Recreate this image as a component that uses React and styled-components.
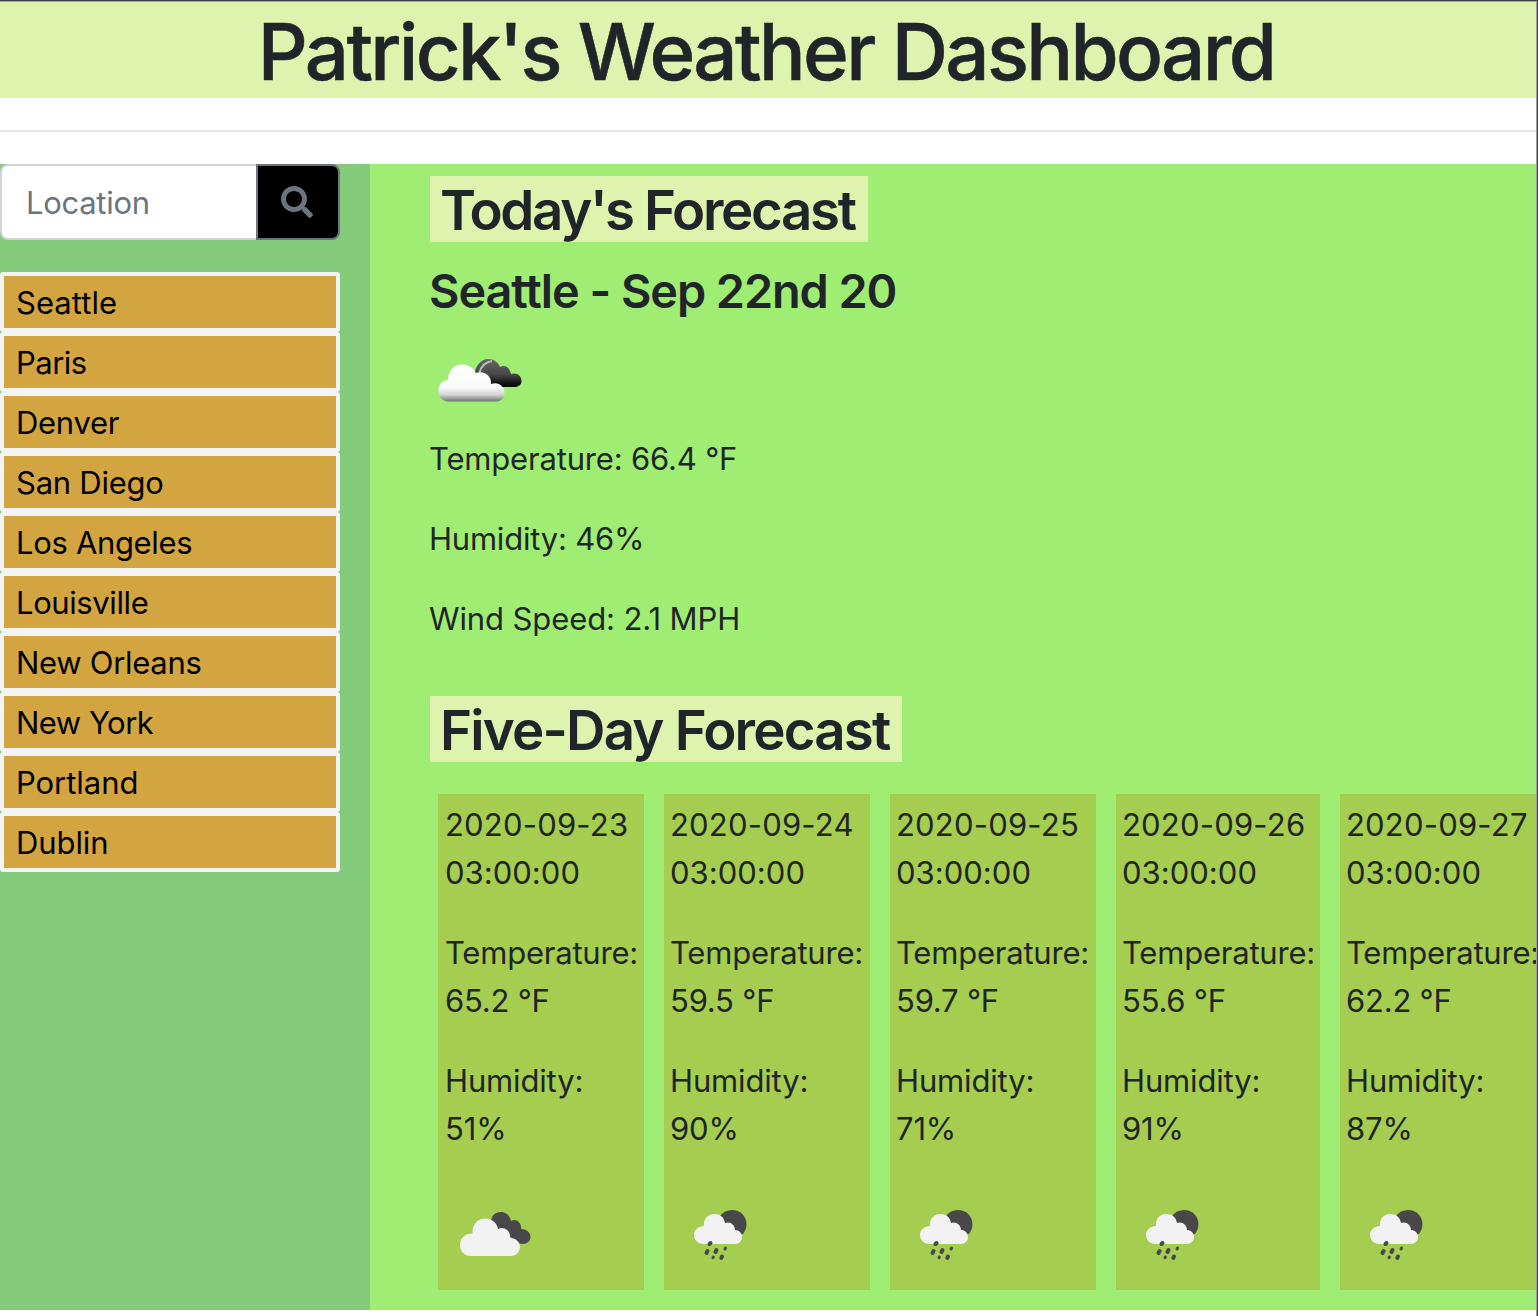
import React from "react";
import styled, { createGlobalStyle } from "styled-components";

const GlobalStyle = createGlobalStyle`
  *, *::before, *::after { box-sizing: border-box; }
  body {
    margin: 0;
    background: #fff;
    color: #212529;
    font-family: Inter, "Liberation Sans", sans-serif;
    font-size: 31px;
    line-height: 48px;
    overflow: hidden;
  }
  h1, h2, h3, p, ul { margin: 0; padding: 0; }
`;

const Frame = styled.div`
  display: flex;
  width: 1538px;
  height: 1316px;
  overflow: hidden;
  border-top: 1px solid #424242;
  border-right: 1px solid #424242;
`;

const Page = styled.div`
  flex: 1;
  min-width: 0;
  overflow: hidden;
  border-top: 1px solid #a3a0a0;
  border-right: 1px solid #a3a0a0;
`;

const Header = styled.header`
  height: 96px;
  padding-right: 4px;
  background: #e0f3ae;
  text-align: center;
`;

const Title = styled.h1`
  font-size: 78px;
  font-weight: 500;
  line-height: 99px;
  letter-spacing: ${(p) => p.$track}px;
  white-space: nowrap;
  -webkit-text-stroke: 0.5px #212529;
`;

const Divider = styled.hr`
  height: 2px;
  margin: 32px 0;
  border: 0;
  background: #e5e5e5;
`;

const Content = styled.div`
  display: flex;
  height: 1146px;
`;

const Sidebar = styled.aside`
  flex: 0 0 370px;
  padding-right: 30px;
  background: #83ca7a;
`;

const SearchBar = styled.form`
  display: flex;
  height: 76px;
  margin-bottom: 32px;
`;

const SearchInput = styled.input`
  width: 256px;
  padding: 2px 24px 0;
  border: 2px solid #ced4da;
  border-right: 0;
  border-radius: 8px 0 0 8px;
  background: #fff;
  font: inherit;
  letter-spacing: -0.3px;
  outline: 0;
  &::placeholder { color: #6c757d; opacity: 1; }
`;

const SearchButton = styled.button`
  display: flex;
  align-items: center;
  justify-content: center;
  width: 84px;
  padding: 0 2px 0 0;
  border: 2px solid #6c757d;
  border-radius: 0 8px 8px 0;
  background: #000;
  color: #6c757d;
`;

const CityList = styled.ul`
  list-style: none;
`;

const City = styled.li`
  height: 60px;
  padding: 3px 12px;
  border: 4px solid #f4f4f6;
  border-radius: 3px;
  background: #d3a540;
  color: #000;
  letter-spacing: ${(p) => p.$track}px;
`;

const Main = styled.main`
  flex: 1;
  min-width: 0;
  padding: 12px 0 0 60px;
  background: #a0ed73;
  overflow: hidden;
`;

const SectionTitle = styled.h2`
  width: ${(p) => p.$width}px;
  height: 66px;
  padding-left: 10px;
  background: #e0f3ae;
  font-size: 54.6px;
  font-weight: 600;
  line-height: 69px;
  letter-spacing: ${(p) => p.$track}px;
  white-space: nowrap;
`;

const Place = styled.h3`
  margin: 21px 0 10px -1px;
  font-size: 46.8px;
  font-weight: 600;
  line-height: 57px;
  letter-spacing: ${(p) => p.$track}px;
`;

const Reading = styled.p`
  margin-bottom: 32px;
  margin-left: ${(p) => p.$nudge || 0}px;
  letter-spacing: ${(p) => p.$track}px;
`;

const Stamp = styled.span`
  letter-spacing: 0.2px;
`;

const Today = styled.section`
  height: 520px;
`;

const WeatherIcon = styled.svg`
  display: block;
  width: 100px;
  height: 100px;
  margin-bottom: ${(p) => p.$after || 0}px;
`;

const Cards = styled.div`
  display: flex;
  gap: 20px;
  margin: 32px 0 0 8px;
`;

const Card = styled.article`
  flex: 0 0 ${(p) => p.$width}px;
  height: 496px;
  padding: 7px 0 0 ${(p) => p.$inset}px;
  background: #a5cd50;
  white-space: nowrap;
`;

const cities = [
  ["Seattle", 0.05], ["Paris", -0.5], ["Denver", -0.3], ["San Diego", -0.25],
  ["Los Angeles", -0.33], ["Louisville", -0.4], ["New Orleans", -0.3],
  ["New York", -0.5], ["Portland", -0.05], ["Dublin", -0.1],
];

const days = [
  ["2020-09-23", "65.2", "51", "cloudy", 206, 7],
  ["2020-09-24", "59.5", "90", "rain", 206, 6],
  ["2020-09-25", "59.7", "71", "rain", 206, 6],
  ["2020-09-26", "55.6", "91", "rain", 204, 6],
  ["2020-09-27", "62.2", "87", "rain", 206, 6],
];

const SearchIcon = () => (
  <svg width="32" height="32" viewBox="0 0 512 512" fill="currentColor">
    <path d="M505 442.7L405.3 343c-4.500-4.500-10.600-7-17-7H372c27.600-35.300 44-79.700 44-128C416 93.100 322.900 0 208 0S0 93.100 0 208s93.100 208 208 208c48.300 0 92.700-16.400 128-44v16.300c0 6.400 2.500 12.500 7 17l99.700 99.700c9.400 9.400 24.600 9.400 33.900 0l28.300-28.300c9.400-9.400 9.400-24.600.1-34zM208 336c-70.700 0-128-57.200-128-128 0-70.700 57.200-128 128-128 70.700 0 128 57.200 128 128 0 70.700-57.200 128-128 128z" />
  </svg>
);

const GlossyClouds = () => (
  <WeatherIcon viewBox="0 0 100 100" $after={5}>
    <defs>
      <linearGradient id="whiteCloud" x1="0" y1="0" x2="0" y2="1">
        <stop offset="0" stopColor="#fff" />
        <stop offset=".62" stopColor="#fafafa" />
        <stop offset=".82" stopColor="#d2d2d2" />
        <stop offset="1" stopColor="#6c756b" />
      </linearGradient>
      <linearGradient id="darkCloud" x1="0" y1="0" x2="0" y2="1">
        <stop offset="0" stopColor="#666" />
        <stop offset=".55" stopColor="#484848" />
        <stop offset=".85" stopColor="#151515" />
        <stop offset="1" stopColor="#050505" />
      </linearGradient>
    </defs>
    <path fill="url(#darkCloud)" d="M44 46C45 36 51 29 58 29C64 29 68 32 70 37C75 34 80 38 81 44C87 42 91.500 46 91.500 51C91.500 55 88 57 84 57H61Z" />
    <path d="M49.500 43C51 36 55 32 62 31" fill="none" stroke="#ddd" strokeWidth="2" opacity=".75" />
    <path fill="url(#whiteCloud)" d="M17 71.500C11 70 8.500 66 8.500 61C8.500 54 12 51 18 50C18 41 24 34.500 31 34.500C38 34.500 43 37 46 43C54 40 62 46 61 54C68 51 75 57 74.500 63C74.500 68 71 71 67 71.500Z" />
  </WeatherIcon>
);

const CloudyIcon = () => (
  <WeatherIcon viewBox="0 0 100 100">
    <path fill="#48484a" d="M46 37C46 31 50 27 56 27C61 27 65 31 66 36C71 33 77 38 76 44C81 44 85.500 47 85.500 52C85.500 56 82 59 78 59C73 59 69 56 66 52L46 52Z" />
    <path fill="#f2f2f2" d="M26 71C19 71 15 66 15 60C15 53 20 48.500 27.500 48.500C27 39 33 33.500 40 33.500C47 33.500 52 38 53 44C59 41 66 46 65 53C71 53 75 57 75 62C75 67 71 71 66 71Z" />
  </WeatherIcon>
);

const RainIcon = () => (
  <WeatherIcon viewBox="0 0 100 100">
    <path fill="#48484a" d="M50 31C53 27 57 25 62 25C70 25 76.500 31 76.500 39.500C76.500 43 75 46 73 49L60 51L52 42Z" />
    <path fill="#f2f2f2" d="M34 59C28 59 24 55 24 50C24 45 28 41 34 41C33 34 38 29 44 29C50 29 54 32 55 38C60 36 65 40 65 45C69 45 72 48 72 52C72 56 69 59 65 59Z" />
    <g fill="none" stroke="#48484a" strokeLinecap="round">
      <path strokeWidth="4" d="M40.500 58L39.500 59M37.500 66L36.500 68M46.500 65L45.500 67M52 71.500L51.300 73" />
      <path strokeWidth="3" d="M55.500 63L55 64M43.300 72L43 72.600" />
    </g>
  </WeatherIcon>
);

export default function App() {
  return (
    <>
      <GlobalStyle />
      <Frame>
        <Page>
          <Header><Title $track={-2.7}>Patrick's Weather Dashboard</Title></Header>
          <Divider />
          <Content>
            <Sidebar>
              <SearchBar>
                <SearchInput placeholder="Location" />
                <SearchButton type="button" aria-label="Search"><SearchIcon /></SearchButton>
              </SearchBar>
              <CityList>
                {cities.map(([name, track]) => <City key={name} $track={track}>{name}</City>)}
              </CityList>
            </Sidebar>
            <Main>
              <Today>
                <SectionTitle $width={438} $track={-2.35}>Today's Forecast</SectionTitle>
                <Place $track={-1.05}>Seattle - Sep 22nd 20</Place>
                <GlossyClouds />
                <Reading $nudge={-1} $track={-0.18}>Temperature: 66.4 °F</Reading>
                <Reading $nudge={-1} $track={-0.22}>Humidity: 46%</Reading>
                <Reading $nudge={-1} $track={-0.1}>Wind Speed: 2.1 MPH</Reading>
              </Today>
              <SectionTitle $width={472} $track={-1.8}>Five-Day Forecast</SectionTitle>
              <Cards>
                {days.map(([date, temp, humidity, sky, width, inset]) => (
                  <Card key={date} $width={width} $inset={inset}>
                    <Reading $track={0.02}><Stamp>{date}</Stamp><br />03:00:00</Reading>
                    <Reading $track={-0.22}>Temperature:<br />{temp} °F</Reading>
                    <Reading $track={-0.15}>Humidity:<br />{humidity}%</Reading>
                    {sky === "rain" ? <RainIcon /> : <CloudyIcon />}
                  </Card>
                ))}
              </Cards>
            </Main>
          </Content>
        </Page>
      </Frame>
    </>
  );
}
